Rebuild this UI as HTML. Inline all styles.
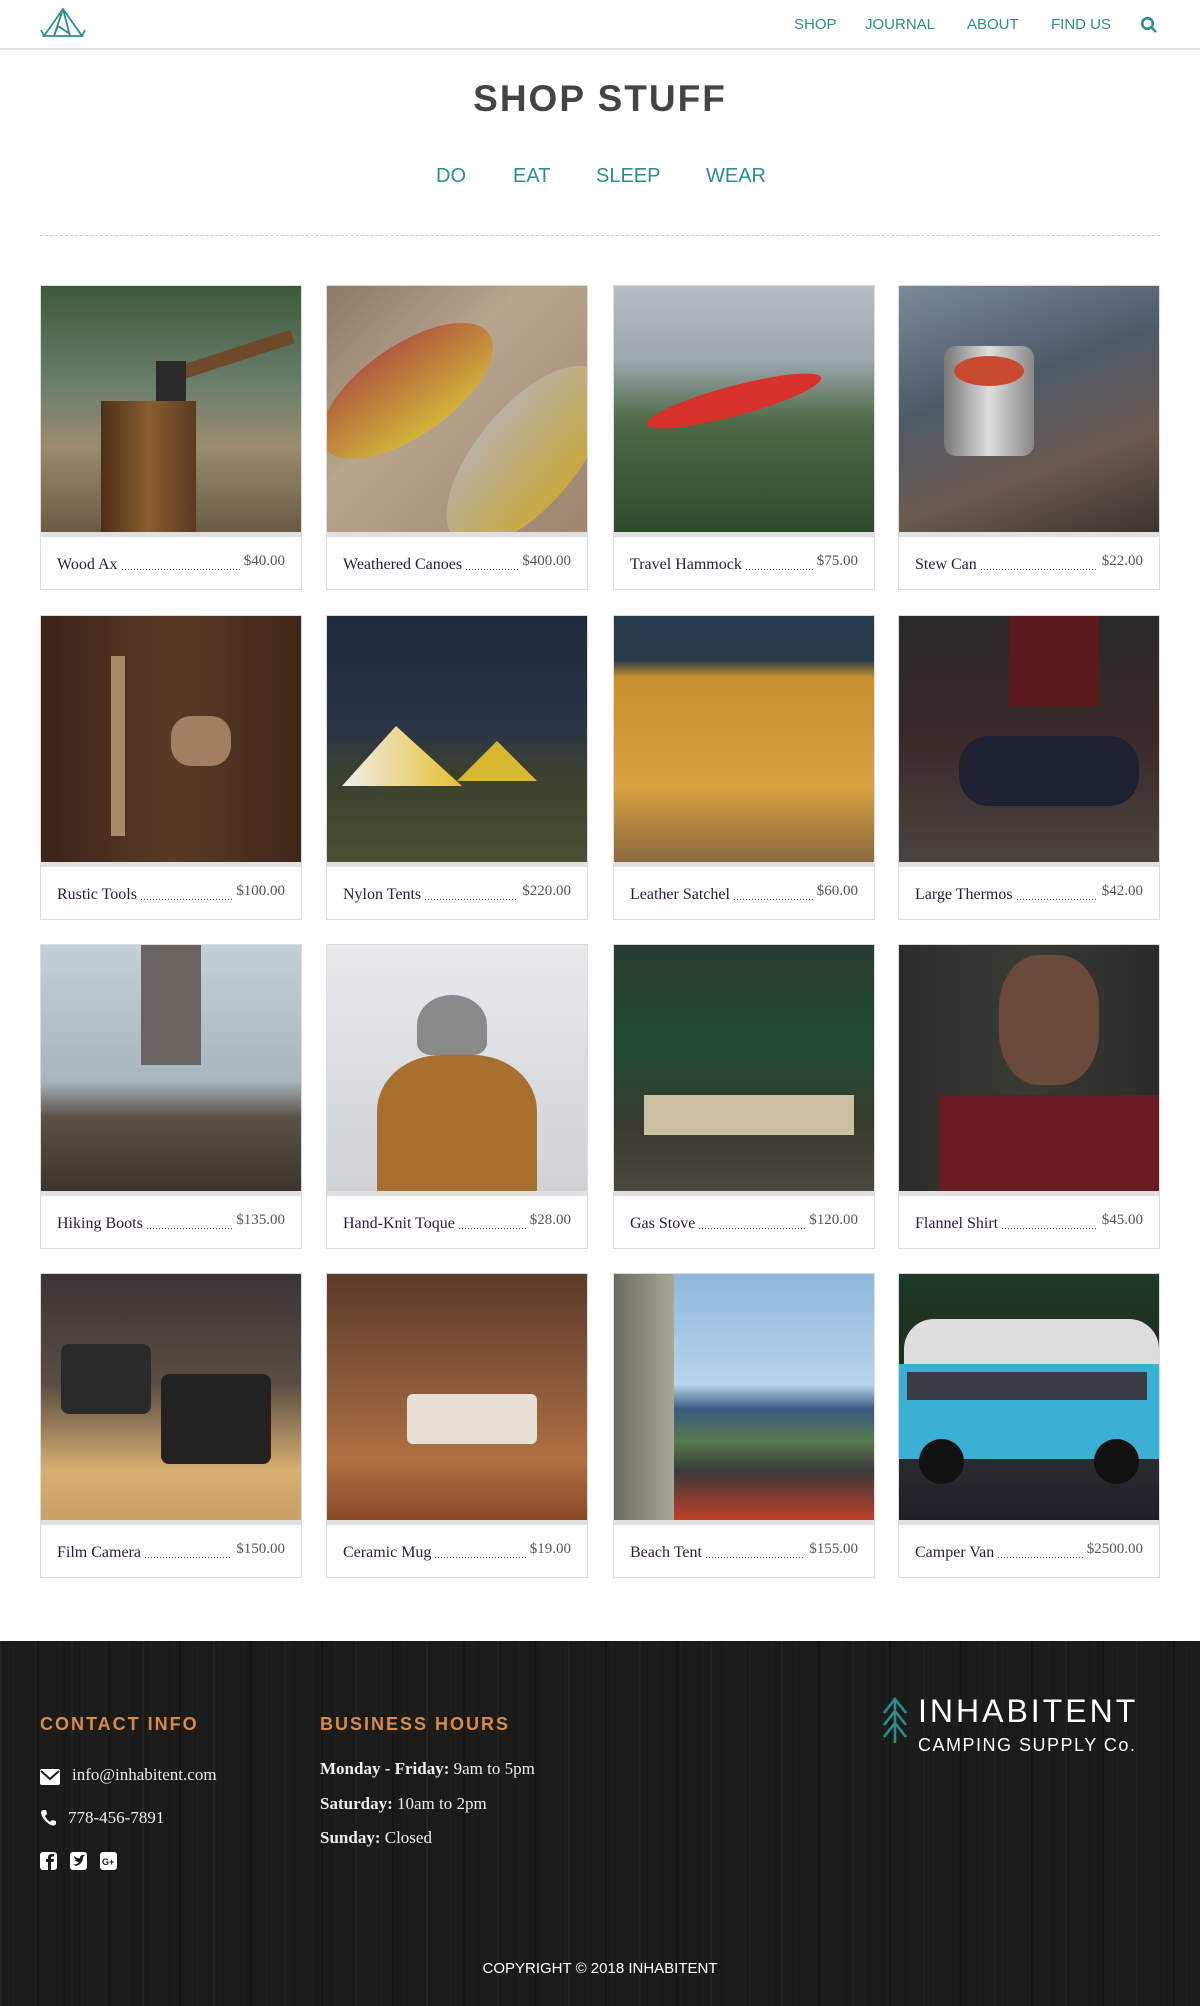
<!DOCTYPE html>
<html><head><meta charset="utf-8"><style>
*{margin:0;padding:0;box-sizing:border-box}
body{width:1200px;height:2006px;background:#fff;font-family:"Liberation Sans",sans-serif;position:relative;overflow:hidden}
.hdr{position:absolute;left:0;top:0;width:1200px;height:50px;border-bottom:2px solid #e4e4e4}
.nav a{position:absolute;top:16px;font-size:15px;color:#2a8f86;text-decoration:none}
h1{position:absolute;top:78px;left:0;width:1200px;text-align:center;font-size:37px;font-weight:bold;color:#444;letter-spacing:2px}
.cat a{position:absolute;top:165px;font-size:20px;color:#2a8f86}
.dots{position:absolute;left:40px;top:235px;width:1120px;border-top:1px dashed #c8c8c8}
.card{position:absolute;width:262px;height:305px;border:1px solid #dcdcdc;background:#fff;overflow:hidden}
.img{position:absolute;left:0;top:0;width:260px;height:246px;overflow:hidden}
.strip{position:absolute;left:0;top:246px;width:260px;height:5px;background:#e0e0e0}
.lbl{position:absolute;left:16px;right:16px;top:270px;display:flex;align-items:flex-end;font-family:"Liberation Serif",serif}
.lbl .n{font-size:16px;color:#2b1a3a;white-space:nowrap}
.lbl .d{flex:1;height:1px;margin:0 4px 4px;background:repeating-linear-gradient(90deg,#444 0 1px,transparent 1px 3px)}
.lbl .p{font-size:15px;color:#555;position:relative;top:-4px;white-space:nowrap}
.foot{position:absolute;left:0;top:1641px;width:1200px;height:365px;background:#1b1b1b;
background-image:repeating-linear-gradient(90deg,rgba(255,255,255,.03) 0 2px,transparent 2px 37px,rgba(0,0,0,.25) 37px 39px,transparent 39px 71px),repeating-linear-gradient(90deg,transparent 0 13px,rgba(255,255,255,.02) 13px 14px,transparent 14px 23px)}
.foot h3{position:absolute;top:73px;font-size:18px;color:#d98b4a;letter-spacing:2px;font-weight:bold}
.foot .t{position:absolute;font-family:"Liberation Serif",serif;color:#eee;font-size:17px}
</style></head><body>
<div class="hdr">
<svg style="position:absolute;left:40px;top:8px" width="46" height="30" viewBox="0 0 46 30" fill="none" stroke="#2a8f86" stroke-width="1.8"><path d="M23 1 L4 28 H42 Z M23 1 L14 28 M23 1 L30 28 M14 28 L18 18 L30 26 M1 22 L4 28 M45 22 L42 28"/></svg>
<div class="nav"><a style="left:794px">SHOP</a><a style="left:865px">JOURNAL</a><a style="left:967px">ABOUT</a><a style="left:1051px">FIND US</a></div>
<svg style="position:absolute;left:1140px;top:16px" width="18" height="18" viewBox="0 0 18 18" fill="none" stroke="#2a8f86" stroke-width="2.6"><circle cx="7.5" cy="7.5" r="5.3"/><path d="M11.5 11.5 L16 16"/></svg>
</div>
<h1>SHOP STUFF</h1>
<div class="cat"><a style="left:436px">DO</a><a style="left:513px">EAT</a><a style="left:596px">SLEEP</a><a style="left:706px">WEAR</a></div>
<div class="dots"></div>

<div class="card" style="left:40px;top:285px"><div class="img" style="background:linear-gradient(180deg,#3d5a3a 0%,#6a7e6c 40%,#9a8c6e 65%,#6b5a44 100%)"><div style="position:absolute;left:60px;top:115px;width:95px;height:131px;background:linear-gradient(90deg,#4a3018,#8a5e30,#5a3a1e)"></div><div style="position:absolute;left:115px;top:65px;width:140px;height:14px;background:#6e4a2a;transform:rotate(-18deg)"></div><div style="position:absolute;left:115px;top:75px;width:30px;height:40px;background:#2a2a2a"></div></div><div class="strip"></div><div class="lbl"><span class="n">Wood Ax</span><span class="d"></span><span class="p">$40.00</span></div></div>
<div class="card" style="left:326px;top:285px"><div class="img" style="background:linear-gradient(135deg,#8a7a66 0%,#b8a58e 40%,#9e8670 100%)"><div style="position:absolute;left:-20px;top:60px;width:200px;height:90px;background:linear-gradient(180deg,#b05a3e,#d2b43a);transform:rotate(-35deg);border-radius:50%"></div><div style="position:absolute;left:90px;top:120px;width:220px;height:100px;background:linear-gradient(180deg,#b8b0a4,#c9a940);transform:rotate(-50deg);border-radius:50%"></div></div><div class="strip"></div><div class="lbl"><span class="n">Weathered Canoes</span><span class="d"></span><span class="p">$400.00</span></div></div>
<div class="card" style="left:613px;top:285px"><div class="img" style="background:linear-gradient(180deg,#b8bcc4 0%,#9ea7ae 30%,#4e6a46 55%,#2c4a2a 100%)"><div style="position:absolute;left:30px;top:100px;width:180px;height:30px;background:#d8302a;transform:rotate(-15deg);border-radius:50%"></div></div><div class="strip"></div><div class="lbl"><span class="n">Travel Hammock</span><span class="d"></span><span class="p">$75.00</span></div></div>
<div class="card" style="left:898px;top:285px"><div class="img" style="background:linear-gradient(160deg,#7a8a98 0%,#4e5a66 40%,#6a5a50 70%,#3a3430 100%)"><div style="position:absolute;left:45px;top:60px;width:90px;height:110px;border-radius:12px;background:linear-gradient(90deg,#777,#ddd,#888)"></div><div style="position:absolute;left:55px;top:70px;width:70px;height:30px;border-radius:50%;background:#c84a30"></div></div><div class="strip"></div><div class="lbl"><span class="n">Stew Can</span><span class="d"></span><span class="p">$22.00</span></div></div>

<div class="card" style="left:40px;top:615px"><div class="img" style="background:linear-gradient(90deg,#3a2418,#5a3a26,#40281a)"><div style="position:absolute;left:70px;top:40px;width:14px;height:180px;background:#a88a66"></div><div style="position:absolute;left:130px;top:100px;width:60px;height:50px;background:#a08060;border-radius:20px"></div></div><div class="strip"></div><div class="lbl"><span class="n">Rustic Tools</span><span class="d"></span><span class="p">$100.00</span></div></div>
<div class="card" style="left:326px;top:615px"><div class="img" style="background:linear-gradient(180deg,#1e2a3c 0%,#2a3446 45%,#3a4030 62%,#4a5030 100%)"><div style="position:absolute;left:15px;top:110px;width:120px;height:60px;background:linear-gradient(90deg,#eee,#e6c030);clip-path:polygon(0 100%,45% 0,100% 100%)"></div><div style="position:absolute;left:130px;top:125px;width:80px;height:40px;background:#d8b830;clip-path:polygon(0 100%,50% 0,100% 100%)"></div></div><div class="strip"></div><div class="lbl"><span class="n">Nylon Tents</span><span class="d"></span><span class="p">$220.00</span></div></div>
<div class="card" style="left:613px;top:615px"><div class="img" style="background:linear-gradient(180deg,#263a4e 0%,#2a3a4a 18%,#c8922e 25%,#d8a040 70%,#8a6a40 100%)"></div><div class="strip"></div><div class="lbl"><span class="n">Leather Satchel</span><span class="d"></span><span class="p">$60.00</span></div></div>
<div class="card" style="left:898px;top:615px"><div class="img" style="background:linear-gradient(180deg,#2a2a2a 0%,#3a2a2a 50%,#4a4440 100%)"><div style="position:absolute;left:110px;top:0;width:90px;height:90px;background:#5a1a1e"></div><div style="position:absolute;left:60px;top:120px;width:180px;height:70px;background:#1e2230;border-radius:30px"></div></div><div class="strip"></div><div class="lbl"><span class="n">Large Thermos</span><span class="d"></span><span class="p">$42.00</span></div></div>

<div class="card" style="left:40px;top:944px"><div class="img" style="background:linear-gradient(180deg,#c4d0d8 0%,#aab6be 55%,#5a5248 70%,#3a342c 100%)"><div style="position:absolute;left:100px;top:0;width:60px;height:120px;background:#6a6460"></div></div><div class="strip"></div><div class="lbl"><span class="n">Hiking Boots</span><span class="d"></span><span class="p">$135.00</span></div></div>
<div class="card" style="left:326px;top:944px"><div class="img" style="background:linear-gradient(180deg,#e8eaec,#cfd3d6)"><div style="position:absolute;left:90px;top:50px;width:70px;height:60px;background:#8a8a8a;border-radius:50% 50% 20% 20%"></div><div style="position:absolute;left:50px;top:110px;width:160px;height:140px;background:#a8702e;border-radius:40% 40% 0 0"></div></div><div class="strip"></div><div class="lbl"><span class="n">Hand-Knit Toque</span><span class="d"></span><span class="p">$28.00</span></div></div>
<div class="card" style="left:613px;top:944px"><div class="img" style="background:linear-gradient(180deg,#2a3a30 0%,#1e4a32 40%,#3a3a30 75%,#4a4840 100%)"><div style="position:absolute;left:30px;top:150px;width:210px;height:40px;background:#c8c0a0"></div></div><div class="strip"></div><div class="lbl"><span class="n">Gas Stove</span><span class="d"></span><span class="p">$120.00</span></div></div>
<div class="card" style="left:898px;top:944px"><div class="img" style="background:linear-gradient(90deg,#2a2e2a 0%,#3a3a34 50%,#2a2a28 100%)"><div style="position:absolute;left:100px;top:10px;width:100px;height:130px;background:#6a4a3a;border-radius:40%"></div><div style="position:absolute;left:40px;top:150px;width:220px;height:100px;background:#6a1a22"></div></div><div class="strip"></div><div class="lbl"><span class="n">Flannel Shirt</span><span class="d"></span><span class="p">$45.00</span></div></div>

<div class="card" style="left:40px;top:1273px"><div class="img" style="background:linear-gradient(180deg,#3a3434 0%,#5a4e44 45%,#d8b070 80%,#c8a068 100%)"><div style="position:absolute;left:20px;top:70px;width:90px;height:70px;background:#2a2a2a;border-radius:8px"></div><div style="position:absolute;left:120px;top:100px;width:110px;height:90px;background:#222;border-radius:8px"></div></div><div class="strip"></div><div class="lbl"><span class="n">Film Camera</span><span class="d"></span><span class="p">$150.00</span></div></div>
<div class="card" style="left:326px;top:1273px"><div class="img" style="background:linear-gradient(180deg,#5a3a2a 0%,#8a5a3a 45%,#b07040 75%,#8a4a28 100%)"><div style="position:absolute;left:80px;top:120px;width:130px;height:50px;background:#e8e0d4;border-radius:6px"></div></div><div class="strip"></div><div class="lbl"><span class="n">Ceramic Mug</span><span class="d"></span><span class="p">$19.00</span></div></div>
<div class="card" style="left:613px;top:1273px"><div class="img" style="background:linear-gradient(180deg,#8fb8dc 0%,#b8d4ea 45%,#3a5a80 55%,#5a7a50 68%,#3a3a3a 80%,#c04028 100%)"><div style="position:absolute;left:0;top:0;width:60px;height:246px;background:linear-gradient(90deg,#6a6a60,#a8a898)"></div></div><div class="strip"></div><div class="lbl"><span class="n">Beach Tent</span><span class="d"></span><span class="p">$155.00</span></div></div>
<div class="card" style="left:898px;top:1273px"><div class="img" style="background:linear-gradient(180deg,#1e3a2a 0%,#203020 25%,#2a2c30 75%,#1e2026 100%)"><div style="position:absolute;left:5px;top:45px;width:255px;height:45px;background:#ddd;border-radius:30px 30px 0 0"></div><div style="position:absolute;left:0;top:90px;width:260px;height:95px;background:#3ab0d4"></div><div style="position:absolute;left:8px;top:98px;width:240px;height:28px;background:#3a3e44"></div><div style="position:absolute;left:20px;top:165px;width:45px;height:45px;border-radius:50%;background:#111"></div><div style="position:absolute;left:195px;top:165px;width:45px;height:45px;border-radius:50%;background:#111"></div></div><div class="strip"></div><div class="lbl"><span class="n">Camper Van</span><span class="d"></span><span class="p">$2500.00</span></div></div>

<div class="foot">
<h3 style="left:40px">CONTACT INFO</h3>
<h3 style="left:320px">BUSINESS HOURS</h3>
<svg style="position:absolute;left:40px;top:128px" width="20" height="16" viewBox="0 0 20 16"><rect width="20" height="16" rx="2" fill="#fff"/><path d="M1 2 L10 10 L19 2" stroke="#1b1b1b" stroke-width="2" fill="none"/></svg>
<div class="t" style="left:72px;top:124px">info@inhabitent.com</div>
<svg style="position:absolute;left:40px;top:168px" width="16" height="18" viewBox="0 0 16 18"><path d="M3 1 L6 1 L7 5 L5 7 Q7 11 10 13 L12 11 L16 12 L16 15 Q14 18 9 15 Q2 10 1 4 Q1 2 3 1Z" fill="#fff"/></svg>
<div class="t" style="left:68px;top:167px">778-456-7891</div>
<svg style="position:absolute;left:40px;top:211px" width="78" height="18" viewBox="0 0 78 18"><rect x="0" y="0" width="17" height="18" rx="3" fill="#fff"/><path d="M11 18 V10 H13.5 L14 7 H11 V5.5 Q11 4.5 12.5 4.5 H14 V2 H11.5 Q8 2 8 5.5 V7 H6 V10 H8 V18" fill="#1b1b1b"/><rect x="30" y="0" width="17" height="18" rx="3" fill="#fff"/><path d="M33 12 Q37 13 39 10 Q36 10 35 8 Q37 8 37 8 Q34 7 34 4 Q38 7 40 6 Q40 3 43 3 L45 3 L43 5 Q43 12 36 14 Z" fill="#1b1b1b"/><rect x="60" y="0" width="17" height="18" rx="3" fill="#fff"/><text x="62" y="13" font-size="9" font-family="Liberation Sans" fill="#1b1b1b" font-weight="bold">G+</text></svg>
<div class="t" style="left:320px;top:118px"><b>Monday - Friday:</b> 9am to 5pm</div>
<div class="t" style="left:320px;top:153px"><b>Saturday:</b> 10am to 2pm</div>
<div class="t" style="left:320px;top:187px"><b>Sunday:</b> Closed</div>
<svg style="position:absolute;left:880px;top:56px" width="30" height="46" viewBox="0 0 30 46" fill="none" stroke="#2a8f86" stroke-width="2.6"><path d="M15 2 V46 M4 16 L15 2 L26 16 M4 28 L15 14 L26 28 M4 40 L15 26 L26 40"/></svg>
<div style="position:absolute;left:918px;top:52px;font-size:32px;color:#fff;letter-spacing:3px">INHABITENT</div>
<div style="position:absolute;left:918px;top:94px;font-size:18px;color:#fff;letter-spacing:1.5px">CAMPING SUPPLY Co.</div>
<div style="position:absolute;left:0;width:1200px;top:319px;text-align:center;font-size:15px;color:#fff">COPYRIGHT © 2018 INHABITENT</div>
</div>
</body></html>
